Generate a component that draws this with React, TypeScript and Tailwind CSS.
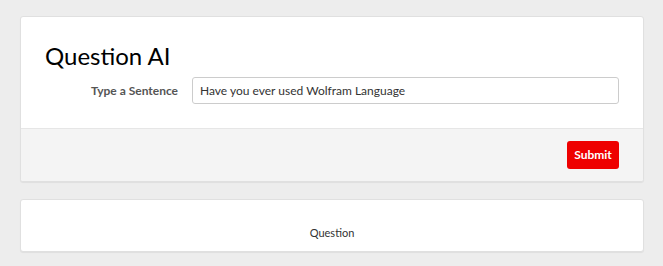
export default function App() {
  return (
    <div className="min-h-[266px] bg-[#ededed] pl-5 pr-[19px] pt-4 pb-3 font-['Lato','Open_Sans',sans-serif]">
      <div className="rounded-[3px] border border-[#e0e0e0] bg-white shadow-[0_1px_1px_rgba(0,0,0,0.06)] overflow-hidden">
        <div className="px-6 pt-6 pb-6">
          <h1 className="text-[24px] leading-[30px] text-black">Question AI</h1>
          <div className="mt-[6px] flex items-center">
            <label className="w-[147px] pr-[14px] text-right text-[12px] font-bold text-[#555]">
              Type a Sentence
            </label>
            <input
              defaultValue="Have you ever used Wolfram Language"
              className="h-[27px] flex-1 rounded-[3px] border border-[#ccc] bg-white px-[7px] text-[12px] text-[#333] outline-none"
            />
          </div>
        </div>
        <div className="flex h-[53px] items-center justify-end border-t border-[#e6e6e6] bg-[#f4f4f4] px-6">
          <button className="h-[28px] w-[52px] rounded-[3px] bg-[#ee0000] text-[12px] font-bold text-white">
            Submit
          </button>
        </div>
      </div>
      <div className="mt-[17px] flex h-[53px] items-end justify-center rounded-[3px] border border-[#e0e0e0] bg-white pb-[10px] shadow-[0_1px_1px_rgba(0,0,0,0.06)]">
        <span className="text-[11px] text-[#333]">Question</span>
      </div>
    </div>
  );
}
